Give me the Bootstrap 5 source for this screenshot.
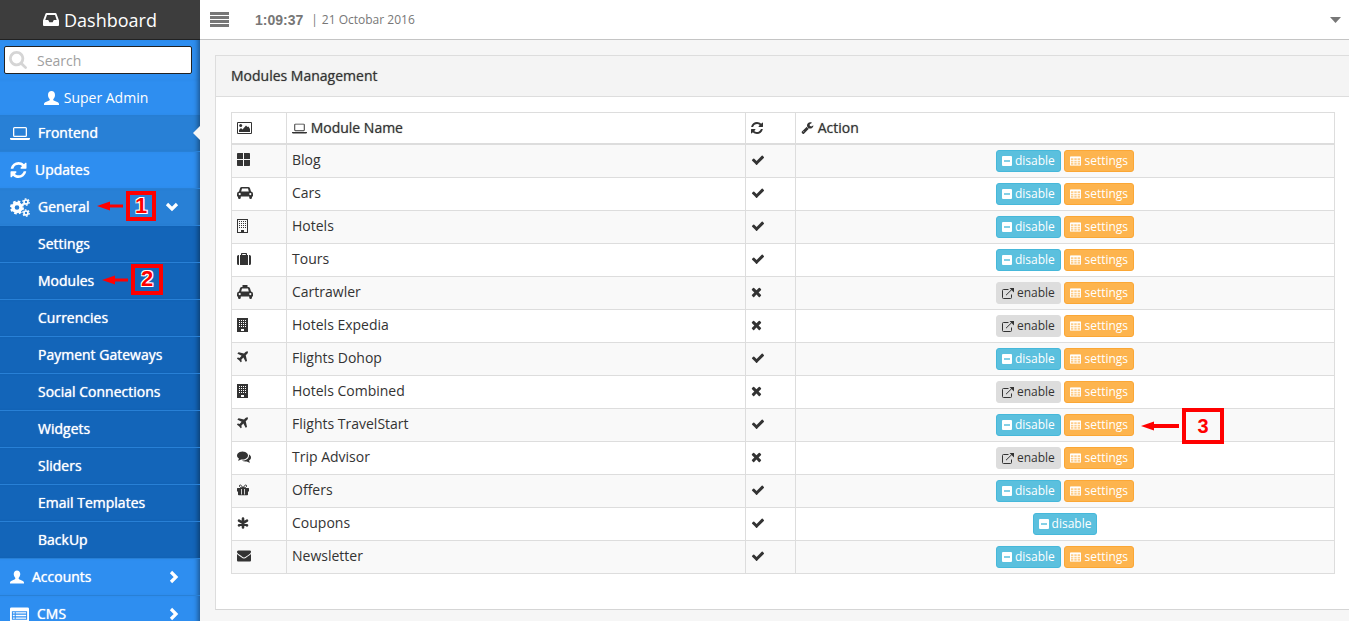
<!DOCTYPE html>
<html lang="en">
<head>
<meta charset="utf-8">
<meta name="viewport" content="width=device-width, initial-scale=1">
<title>Dashboard - Modules Management</title>
<link rel="stylesheet" href="https://cdn.jsdelivr.net/npm/bootstrap@5.3.0/dist/css/bootstrap.min.css">
<style>
  body { font-family: "Open Sans", sans-serif; font-size: 14px; line-height: 20px; color: #333; background: #f6f6f6; }
  svg { fill: currentColor; flex: none; }
  .shell { height: 100vh; }
  .strong-text { font-weight: 400; text-shadow: 0 0 1px currentColor; }
  .panel .strong-text { text-shadow: 0 0 1px rgba(51,51,51,.6); }

  .side { width: 200px; background: #2e8ef0; color: #fff; }
  .brand-bar { height: 40px; gap: 5px; background: #3d3d3d; border-bottom: 1px solid #222; font-size: 18px; color: #fff; }
  .side-search, .side-user, .side-item { box-shadow: inset -6px 0 5px -4px rgba(0,0,0,.4); }
  .side-search { height: 40px; padding: 6px 8px 6px 4px; }
  .side-search label { left: 5px; top: 5px; color: #d5d5d5; }
  .side-search label svg { display: block; }
  .side-search input { height: 28px; padding: 0 8px 0 32px; font-size: 14px; line-height: 20px; border: 1px solid #222; border-radius: 2px; color: #555; }
  .side-search input::placeholder { color: #a0a0a0; }
  .side-user { height: 35px; gap: 5px; padding-right: 8px; }
  .side-item { position: relative; height: 37px; padding: 0 21px 0 10px; gap: 8px; border-bottom: 1px solid #2880d6; color: #fff; text-decoration: none; }
  .side-item.current { background: #2880d6; }
  .side-sub .side-item { background: #1365b9; padding-left: 38px; }
  .pointer { position: absolute; right: 0; top: 11px; border: 7px solid transparent; border-left: 0; border-right-color: #f6f6f6; }

  .callout { position: absolute; z-index: 2; gap: 3px; color: #f00; font: bold 22px/24px "Liberation Sans", Arial, sans-serif; }
  .callout b { border: 4px solid #f00; text-align: center; text-shadow: 1px 1px 0 #fff, -1px -1px 0 #fff, 1px -1px 0 #fff, -1px 1px 0 #fff; }
  .callout-one { left: 97px; top: 2px; }
  .callout-one b { width: 30px; height: 30px; line-height: 22px; }
  .callout-two { left: 102px; top: 1px; }
  .callout-two b { width: 32px; height: 31px; line-height: 22px; }
  .callout-three { left: calc(50% + 76px); top: -1px; font-size: 20px; }
  .callout-three b { width: 42px; height: 36px; line-height: 28px; text-shadow: none; }

  .top-bar { height: 40px; background: #fff; border-bottom: 1px solid #c4c4c4; color: #777; padding: 0 8px 0 10px; }
  .top-bar button { background: none; border: 0; padding: 0; color: #777; display: flex; }
  .clock { margin-left: 26px; font: bold 14px/20px "Liberation Sans", Arial, sans-serif; }
  .date { font-size: 12px; }

  .page-main { padding: 15px 0 0 15px; }
  .panel { background: #fff; border: 1px solid #ddd; border-right: 0; border-bottom: 1px solid #d5d5d5; }
  .panel-title { background: #f4f4f4; border-bottom: 1px solid #ddd; padding: 10px 15px; font-size: 14px; line-height: 20px; }
  .panel-content { padding: 15px 14px 15px 15px; }
  .modules { table-layout: fixed; margin-bottom: 20px; color: #333; border-color: #ddd; }
  .modules > :not(caption) > * > * { padding: 5px; background: none; box-shadow: none; border: 1px solid #ddd; vertical-align: top; }
  .modules > thead > tr > th { border-bottom-width: 2px; }
  .modules > tbody > tr:nth-child(odd) { background: #f9f9f9; }
  .modules > tbody { border-top: 0; }
  .modules svg { display: block; margin-top: 3px; }
  .modules th svg { margin-top: 4px; }
  .modules .strong-text svg { display: inline-block; vertical-align: -1px; margin: 0; }
  .modules td.actions { position: relative; }
  .act { display: inline-flex; align-items: center; vertical-align: top; gap: 3px; height: 22px; padding: 0 5px; font-size: 12px; line-height: 18px; border: 1px solid; border-radius: 3px; }
  .modules .act svg { margin: 0; }
  .act-off { background: #5bc0de; border-color: #46b8da; color: #fff; }
  .act-on { background: #ddd; border-color: #ddd; color: #333; }
  .act-set { background: #fdb44e; border-color: #fba735; color: #fff; }
</style>
</head>
<body>
<svg class="d-none" aria-hidden="true">
  <symbol id="i-check" viewBox="0 0 1792 1792"><path d="M1671 566q0 40-28 68l-724 724-136 136q-28 28-68 28t-68-28l-136-136-362-362q-28-28-28-68t28-68l136-136q28-28 68-28t68 28l294 295 656-657q28-28 68-28t68 28l136 136q28 28 28 68z"/></symbol>
  <symbol id="i-times" viewBox="200 200 1400 1400"><path d="M1490 1322q0 40-28 68l-136 136q-28 28-68 28t-68-28l-294-294-294 294q-28 28-68 28t-68-28l-136-136q-28-28-28-68t28-68l294-294-294-294q-28-28-28-68t28-68l136-136q28-28 68-28t68 28l294 294 294-294q28-28 68-28t68 28l136 136q28 28 28 68t-28 68l-294 294 294 294q28 28 28 68z"/></symbol>
  <symbol id="i-refresh" viewBox="128 128 1536 1536"><path d="M1639 1056q0 5-1 7-64 268-268 434.500t-478 166.500q-146 0-282.500-55t-243.500-157l-129 129q-19 19-45 19t-45-19-19-45v-448q0-26 19-45t45-19h448q26 0 45 19t19 45-19 45l-137 137q71 66 161 102t187 36q134 0 250-65t186-179q11-17 53-117 8-23 30-23h192q13 0 22.500 9.500t9.500 22.500zm25-800v448q0 26-19 45t-45 19h-448q-26 0-45-19t-19-45 19-45l138-138q-148-137-349-137-134 0-250 65t-186 179q-11 17-53 117-8 23-30 23h-199q-13 0-22.500-9.500t-9.500-22.500v-7q65-268 270-434.500t480-166.500q146 0 284 55.500t245 156.500l130-129q19-19 45-19t45 19 19 45z"/></symbol>
  <symbol id="i-envelope" viewBox="0 256 1792 1408"><path d="M1792 710v794q0 66-47 113t-113 47h-1472q-66 0-113-47t-47-113v-794q44 49 101 87 362 246 497 345 57 42 92.500 65.500t94.500 48 110 24.500h2q51 0 110-24.500t94.500-48 92.500-65.500q170-123 498-345 57-39 100-87zm0-294q0 79-49 151t-122 123q-376 261-468 325-10 7-42.500 31t-54 38.500-52 32.500-57.500 27-50 9h-2q-23 0-50-9t-57.500-27-52-32.500-54-38.500-42.500-31q-91-64-262-182.500t-205-142.500q-62-42-117-115.500t-55-136.500q0-78 41.500-130t118.500-52h1472q65 0 112.500 47t47.500 113z"/></symbol>
  <symbol id="i-comments" viewBox="0 128 1792 1664"><path d="M1408 768q0 139-94 257t-256.500 186.500-353.500 68.500q-86 0-176-16-124 88-278 128-36 9-86 16h-3q-11 0-20.500-8t-11.500-21q-1-3-1-6.500t.5-6.500 2-6l2.500-5 3.500-5.500 4-5 4.500-5 4-4.500q5-6 23-25t26-29.500 22.500-29 25-38.500 20.500-44q-124-72-195-177t-71-224q0-139 94-257t256.500-186.500 353.500-68.500 353.500 68.500 256.500 186.500 94 257zm384 256q0 120-71 224.500t-195 176.500q10 24 20.500 44t25 38.500 22.500 29 26 29.500 23 25q1 1 4 4.500t4.500 5 4 5 3.500 5.500l2.500 5 2 6 .5 6.500-1 6.500q-3 14-13 22t-22 7q-50-7-86-16-154-40-278-128-90 16-176 16-271 0-472-132 58 4 88 4 161 0 309-45t264-129q125-92 192-212t67-254q0-77-23-152 129 71 204 178t75 230z"/></symbol>
  <symbol id="i-wrench" viewBox="64 100 1680 1680"><path d="M448 1472q0-26-19-45t-45-19-45 19-19 45 19 45 45 19 45-19 19-45zm644-420l-682 682q-37 37-90 37-52 0-91-37l-106-108q-38-36-38-90 0-53 38-91l681-681q39 98 114.500 173.500t173.500 114.500zm634-435q0 39-23 106-47 134-164.500 217.500t-258.500 83.500q-185 0-316.500-131.500t-131.500-316.500 131.500-316.500 316.500-131.500q58 0 121.500 16.500t107.500 46.500q16 11 16 28t-16 28l-293 169v224l193 107q5-3 79-48.500t135.500-81 70.500-35.500q15 0 23.500 10t8.500 25z"/></symbol>
  <symbol id="i-plane" viewBox="192 100 1536 1536"><path d="M1568 160q44 52 12 148t-108 172l-161 161 160 696q5 19-12 33l-128 96q-7 6-19 6-4 0-7-1-15-3-21-16l-279-508-259 259 53 194q5 17-8 31l-96 96q-9 9-23 9h-2q-15-2-24-13l-189-252-252-189q-11-7-13-23-1-13 9-25l96-97q9-9 23-9 6 0 8 1l194 53 259-259-508-279q-14-8-17-24-2-16 9-27l128-128q14-13 30-8l665 159 160-160q76-76 172-108t148 12z"/></symbol>
  <symbol id="i-search" viewBox="64 128 1664 1664"><path d="M1216 832q0-185-131.500-316.500t-316.500-131.500-316.500 131.500-131.500 316.500 131.500 316.500 316.500 131.500 316.500-131.500 131.500-316.500zm512 832q0 52-38 90t-90 38q-54 0-90-38l-343-342q-179 124-399 124-143 0-273.500-55.500t-225-150-150-225-55.500-273.500 55.500-273.500 150-225 225-150 273.500-55.500 273.500 55.500 225 150 150 225 55.500 273.500q0 220-124 399l343 343q37 37 37 90z"/></symbol>
  <symbol id="i-inbox" viewBox="0 0 16 13"><path fill-rule="evenodd" d="M3.600 0h8.800q.8 0 1.100.7L16 7.500V12q0 1-1 1H1q-1 0-1-1V7.500L2.500.7Q2.800 0 3.600 0zM4 2L2.300 7h2.900l1.200 2.200h3.200L10.800 7h2.900L12 2z"/></symbol>
  <symbol id="i-user" viewBox="0 0 15 14"><path d="M7.500 0C5.400 0 4 1.500 4 3.900c0 1.600.7 3.100 1.600 4 .3.300.2 1.200-.3 1.500L1.200 11.200C.4 11.600 0 12.200 0 13v1h15v-1c0-.8-.4-1.400-1.200-1.800L9.700 9.400c-.5-.3-.6-1.200-.3-1.500.9-.9 1.600-2.400 1.600-4C11 1.500 9.600 0 7.500 0z"/></symbol>
  <symbol id="i-laptop" viewBox="0 0 20 13"><path fill-rule="evenodd" d="M4.500 0h11Q17 0 17 1.500v7q0 1.500-1.500 1.500h-11Q3 10 3 8.500v-7Q3 0 4.500 0zM4.300 1.200v7.600h11.400V1.200zM0 11h20v.8q0 1.200-1.500 1.200h-17Q0 13 0 11.800z"/></symbol>
  <symbol id="i-cogs" viewBox="0 0 20 19">
    <g fill="none" stroke="currentColor"><circle cx="7" cy="9.500" r="4" stroke-width="3.400"/><circle cx="7" cy="9.500" r="6" stroke-width="2" stroke-dasharray="2.600 2.112"/><circle cx="16" cy="4" r="2" stroke-width="1.700"/><circle cx="16" cy="4" r="3.200" stroke-width="1.300" stroke-dasharray="1.700 1.650"/><circle cx="16" cy="15" r="2" stroke-width="1.700"/><circle cx="16" cy="15" r="3.200" stroke-width="1.300" stroke-dasharray="1.700 1.650"/></g></symbol>
  <symbol id="i-list" viewBox="0 0 20 15"><path fill-rule="evenodd" d="M1.500 0h17Q20 0 20 1.500v12q0 1.500-1.500 1.500h-17Q0 15 0 13.500v-12Q0 0 1.500 0zM2 4v9h16V4zM3 5h2v1.500H3zm3 0h11v1.500H6zM3 7.800h2v1.500H3zm3 0h11v1.500H6zM3 10.600h2v1.500H3zm3 0h11v1.500H6z"/></symbol>
  <symbol id="i-right" viewBox="0 0 10 14"><path d="M2 2l5 5-5 5" fill="none" stroke="currentColor" stroke-width="3.200"/></symbol>
  <symbol id="i-down" viewBox="0 0 14 10"><path d="M2 2l5 5 5-5" fill="none" stroke="currentColor" stroke-width="3.200"/></symbol>
  <symbol id="i-arrow" viewBox="0 0 26 10"><path d="M0 5L13 .500V3.500H26v3H13v3z"/></symbol>
  <symbol id="i-arrow-long" viewBox="0 0 38 10"><path d="M0 5L13 .500V3H38v4H13v2.500z"/></symbol>
  <symbol id="i-picture" viewBox="0 0 15 12"><path fill-rule="evenodd" d="M1 0h13q1 0 1 1v10q0 1-1 1H1q-1 0-1-1V1q0-1 1-1zM1 1v10h13V1z"/><circle cx="3.700" cy="3.500" r="1.500"/><path d="M2 10V8l2-2 1.500 1.500L9 3.500l1.500 1.500 1-.5L13 7v3z"/></symbol>
  <symbol id="i-large" viewBox="0 0 13 13"><path d="M0 .8Q0 0 .8 0H6v6H0zM7 0h5.200q.8 0 .8.8V6H7zM0 7h6v6H.8Q0 13 0 12.200zM7 7h6v5.200q0 .8-.8.8H7z"/></symbol>
  <symbol id="i-car" viewBox="0 0 16 12"><path fill-rule="evenodd" d="M4.800 0h6.400q1.400 0 1.800 1.200L14 4.500q2 .2 2 2.300v2.400q0 .4-.5.400H15v.9q0 1.500-1.400 1.500T12.200 10.500v-.9H3.800v.9Q3.800 12 2.400 12T1 10.500v-.9H.5Q0 9.600 0 9.200V6.800Q0 4.700 2 4.500L3 1.200Q3.400 0 4.800 0zM5 1.500L4.200 4.500h7.600L11 1.500zM2.700 6a1.100 1.100 0 100 2.200 1.100 1.100 0 000-2.200zm10.600 0a1.100 1.100 0 100 2.200 1.100 1.100 0 000-2.200z"/></symbol>
  <symbol id="i-taxi" viewBox="0 0 16 14"><path d="M5.500 0h5v2.500h-5z"/><path fill-rule="evenodd" d="M4.800 2h6.400q1.400 0 1.800 1.200L14 6.500q2 .2 2 2.300v2.400q0 .4-.5.400H15v.9q0 1.500-1.400 1.500T12.200 12.500v-.9H3.800v.9Q3.800 14 2.400 14T1 12.500v-.9H.5Q0 11.600 0 11.200V8.800Q0 6.700 2 6.500L3 3.200Q3.400 2 4.800 2zM5 3.500L4.200 6.500h7.600L11 3.500zM2.700 8a1.100 1.100 0 100 2.200 1.100 1.100 0 000-2.200zm10.600 0a1.100 1.100 0 100 2.200 1.100 1.100 0 000-2.200z"/></symbol>
  <symbol id="i-hotel" viewBox="0 0 11 14"><path fill-rule="evenodd" d="M0 0h11v14H0zM1 1v12h3v-2h3v2h3V1z"/><path d="M2 2.500h7M2 4.500h7M2 6.500h7M2 8.500h7" stroke="currentColor" stroke-dasharray="1 1"/></symbol>
  <symbol id="i-tower" viewBox="0 0 11 14"><path fill-rule="evenodd" d="M0 0h11v14H0zM4 11v2h3v-2z"/><path d="M2 2.500h7M2 4.500h7M2 6.500h7M2 8.500h7" stroke="#fff" stroke-dasharray="1 1"/></symbol>
  <symbol id="i-suitcase" viewBox="0 0 14 12"><path fill-rule="evenodd" d="M4 2V.8Q4 0 4.800 0h4.400q.8 0 .8.800V2h1v10H3V2zm1.200 0h3.600V1H5.200zM2 2v10h-.5Q0 12 0 10.500v-7Q0 2 1.500 2zm10 0h.5Q14 2 14 3.500v7q0 1.500-1.500 1.500H12z"/></symbol>
  <symbol id="i-gift" viewBox="0 0 12 12"><path fill-rule="evenodd" d="M.5 4h11q.5 0 .5.500V7.500H11v3q0 .8-.8.800H1.800Q1 11.300 1 10.500v-3H0v-3Q0 4 .5 4zM4.200 5v5.500h.8V5zm2.800 0v5.500h.8V5z"/><path d="M6 4Q4.500 1 3.300 1T2.500 2.500Q2.800 3.900 6 4 7.500 1 8.700 1t.8 1.500Q9.200 3.900 6 4" fill="none" stroke="currentColor" stroke-width="1"/></symbol>
  <symbol id="i-asterisk" viewBox="0 0 12 12"><path d="M6 1.500v9M2 3.700l8 4.600M10 3.700L2 8.300" stroke="currentColor" stroke-width="2.600" stroke-linecap="round"/></symbol>
  <symbol id="i-minus" viewBox="0 0 10 10"><path fill-rule="evenodd" d="M1 0h8q1 0 1 1v8q0 1-1 1H1q-1 0-1-1V1q0-1 1-1zM2 4.200v1.600h6V4.200z"/></symbol>
  <symbol id="i-open" viewBox="0 0 12 11"><path d="M6.500 1.500H1.500Q.5 1.500.5 2.500v7q0 1 1 1h7q1 0 1-1V6.500M4 7.200L9.800 1.500" fill="none" stroke="currentColor" stroke-width="1"/><path d="M7.500 0H12v4.500z"/></symbol>
  <symbol id="i-grid" viewBox="0 0 12 10"><path fill-rule="evenodd" d="M1 0h10q1 0 1 1v8q0 1-1 1H1q-1 0-1-1V1q0-1 1-1zM1 2v1.800h2.700V2zm3.700 0v1.800h2.600V2zm3.600 0v1.800H11V2zM1 4.700v1.800h2.700V4.700zm3.700 0v1.800h2.600V4.700zm3.600 0v1.800H11V4.700zM1 7.300V9h2.700V7.300zm3.700 0V9h2.600V7.300zm3.600 0V9H11V7.300z"/><path d="M0 0h12v10H0z" fill-opacity=".35"/></symbol>
</svg>

<div class="shell d-flex overflow-hidden">
  <nav class="side flex-shrink-0" aria-label="Main">
    <div class="brand-bar d-flex align-items-center justify-content-center"><svg width="16" height="13"><use href="#i-inbox"/></svg>Dashboard</div>
    <form class="side-search">
      <div class="position-relative">
        <input id="q" class="w-100 d-block" type="text" placeholder="Search">
        <label class="position-absolute" for="q"><svg width="18" height="18" role="img" aria-label="Search"><use href="#i-search"/></svg></label>
      </div>
    </form>
    <div class="side-user d-flex align-items-center justify-content-center"><svg width="15" height="14"><use href="#i-user"/></svg>Super Admin</div>
    <a class="side-item current strong-text d-flex align-items-center" href="#"><svg width="20" height="13"><use href="#i-laptop"/></svg>Frontend<span class="pointer"></span></a>
    <a class="side-item strong-text d-flex align-items-center" href="#"><svg width="17" height="16"><use href="#i-refresh"/></svg>Updates</a>
    <a class="side-item current strong-text d-flex align-items-center" href="#"><svg width="20" height="19"><use href="#i-cogs"/></svg>General
      <span class="callout callout-one d-flex align-items-center"><svg width="26" height="10"><use href="#i-arrow"/></svg><b>1</b></span>
      <svg class="ms-auto" width="14" height="10"><use href="#i-down"/></svg></a>
    <div class="side-sub">
      <a class="side-item strong-text d-flex align-items-center" href="#">Settings</a>
      <a class="side-item strong-text d-flex align-items-center" href="#">Modules
        <span class="callout callout-two d-flex align-items-center"><svg width="26" height="10"><use href="#i-arrow"/></svg><b>2</b></span></a>
      <a class="side-item strong-text d-flex align-items-center" href="#">Currencies</a>
      <a class="side-item strong-text d-flex align-items-center" href="#">Payment Gateways</a>
      <a class="side-item strong-text d-flex align-items-center" href="#">Social Connections</a>
      <a class="side-item strong-text d-flex align-items-center" href="#">Widgets</a>
      <a class="side-item strong-text d-flex align-items-center" href="#">Sliders</a>
      <a class="side-item strong-text d-flex align-items-center" href="#">Email Templates</a>
      <a class="side-item strong-text d-flex align-items-center" href="#">BackUp</a>
    </div>
    <a class="side-item strong-text d-flex align-items-center" href="#"><svg width="14" height="14"><use href="#i-user"/></svg>Accounts<svg class="ms-auto" width="10" height="14"><use href="#i-right"/></svg></a>
    <a class="side-item strong-text d-flex align-items-center" href="#"><svg width="19" height="15"><use href="#i-list"/></svg>CMS<svg class="ms-auto" width="10" height="14"><use href="#i-right"/></svg></a>
  </nav>

  <div class="flex-grow-1">
    <header class="top-bar d-flex align-items-center">
      <button type="button" aria-label="Toggle menu"><svg width="19" height="15" viewBox="0 0 19 15"><path d="M0 0h19v3H0zM0 4h19v3H0zM0 8h19v3H0zM0 12h19v3H0z"/></svg></button>
      <span class="clock">1:09:37</span><span class="date ps-1 ms-1 me-1">|</span><span class="date">21 Octobar 2016</span>
      <button class="ms-auto" type="button" aria-label="Account menu"><svg width="11" height="6" viewBox="0 0 11 6"><path d="M0 0h11L5.500 6z"/></svg></button>
    </header>
    <main class="page-main">
      <section class="panel">
        <h1 class="panel-title strong-text m-0">Modules Management</h1>
        <div class="panel-content">
          <table class="table modules">
            <colgroup><col style="width:55px"><col style="width:459px"><col style="width:50px"><col></colgroup>
            <thead><tr>
              <th><svg width="15" height="12" role="img" aria-label="Icon"><use href="#i-picture"/></svg></th>
              <th class="strong-text"><svg width="15" height="11"><use href="#i-laptop"/></svg> Module Name</th>
              <th><svg width="12" height="12" role="img" aria-label="Status"><use href="#i-refresh"/></svg></th>
              <th class="strong-text"><svg width="13" height="12"><use href="#i-wrench"/></svg> Action</th>
            </tr></thead>
            <tbody>
              <tr><td><svg width="13" height="13"><use href="#i-large"/></svg></td><td>Blog</td><td><svg width="14" height="14"><use href="#i-check"/></svg></td><td class="actions text-center"><button type="button" class="act act-off"><svg width="10" height="10"><use href="#i-minus"/></svg>disable</button> <button type="button" class="act act-set"><svg width="11" height="10"><use href="#i-grid"/></svg>settings</button></td></tr>
              <tr><td><svg width="16" height="14"><use href="#i-car"/></svg></td><td>Cars</td><td><svg width="14" height="14"><use href="#i-check"/></svg></td><td class="actions text-center"><button type="button" class="act act-off"><svg width="10" height="10"><use href="#i-minus"/></svg>disable</button> <button type="button" class="act act-set"><svg width="11" height="10"><use href="#i-grid"/></svg>settings</button></td></tr>
              <tr><td><svg width="11" height="14"><use href="#i-hotel"/></svg></td><td>Hotels</td><td><svg width="14" height="14"><use href="#i-check"/></svg></td><td class="actions text-center"><button type="button" class="act act-off"><svg width="10" height="10"><use href="#i-minus"/></svg>disable</button> <button type="button" class="act act-set"><svg width="11" height="10"><use href="#i-grid"/></svg>settings</button></td></tr>
              <tr><td><svg width="14" height="14"><use href="#i-suitcase"/></svg></td><td>Tours</td><td><svg width="14" height="14"><use href="#i-check"/></svg></td><td class="actions text-center"><button type="button" class="act act-off"><svg width="10" height="10"><use href="#i-minus"/></svg>disable</button> <button type="button" class="act act-set"><svg width="11" height="10"><use href="#i-grid"/></svg>settings</button></td></tr>
              <tr><td><svg width="16" height="14"><use href="#i-taxi"/></svg></td><td>Cartrawler</td><td><svg width="11" height="14"><use href="#i-times"/></svg></td><td class="actions text-center"><button type="button" class="act act-on"><svg width="12" height="11"><use href="#i-open"/></svg>enable</button> <button type="button" class="act act-set"><svg width="11" height="10"><use href="#i-grid"/></svg>settings</button></td></tr>
              <tr><td><svg width="11" height="14"><use href="#i-tower"/></svg></td><td>Hotels Expedia</td><td><svg width="11" height="14"><use href="#i-times"/></svg></td><td class="actions text-center"><button type="button" class="act act-on"><svg width="12" height="11"><use href="#i-open"/></svg>enable</button> <button type="button" class="act act-set"><svg width="11" height="10"><use href="#i-grid"/></svg>settings</button></td></tr>
              <tr><td><svg width="12" height="12"><use href="#i-plane"/></svg></td><td>Flights Dohop</td><td><svg width="14" height="14"><use href="#i-check"/></svg></td><td class="actions text-center"><button type="button" class="act act-off"><svg width="10" height="10"><use href="#i-minus"/></svg>disable</button> <button type="button" class="act act-set"><svg width="11" height="10"><use href="#i-grid"/></svg>settings</button></td></tr>
              <tr><td><svg width="11" height="14"><use href="#i-tower"/></svg></td><td>Hotels Combined</td><td><svg width="11" height="14"><use href="#i-times"/></svg></td><td class="actions text-center"><button type="button" class="act act-on"><svg width="12" height="11"><use href="#i-open"/></svg>enable</button> <button type="button" class="act act-set"><svg width="11" height="10"><use href="#i-grid"/></svg>settings</button></td></tr>
              <tr><td><svg width="12" height="12"><use href="#i-plane"/></svg></td><td>Flights TravelStart</td><td><svg width="14" height="14"><use href="#i-check"/></svg></td><td class="actions text-center"><button type="button" class="act act-off"><svg width="10" height="10"><use href="#i-minus"/></svg>disable</button> <button type="button" class="act act-set"><svg width="11" height="10"><use href="#i-grid"/></svg>settings</button>
                <span class="callout callout-three d-flex align-items-center"><svg class="m-0" width="38" height="10"><use href="#i-arrow-long"/></svg><b>3</b></span></td></tr>
              <tr><td><svg width="14" height="14"><use href="#i-comments"/></svg></td><td>Trip Advisor</td><td><svg width="11" height="14"><use href="#i-times"/></svg></td><td class="actions text-center"><button type="button" class="act act-on"><svg width="12" height="11"><use href="#i-open"/></svg>enable</button> <button type="button" class="act act-set"><svg width="11" height="10"><use href="#i-grid"/></svg>settings</button></td></tr>
              <tr><td><svg width="12" height="14"><use href="#i-gift"/></svg></td><td>Offers</td><td><svg width="14" height="14"><use href="#i-check"/></svg></td><td class="actions text-center"><button type="button" class="act act-off"><svg width="10" height="10"><use href="#i-minus"/></svg>disable</button> <button type="button" class="act act-set"><svg width="11" height="10"><use href="#i-grid"/></svg>settings</button></td></tr>
              <tr><td><svg width="12" height="14"><use href="#i-asterisk"/></svg></td><td>Coupons</td><td><svg width="14" height="14"><use href="#i-check"/></svg></td><td class="actions text-center"><button type="button" class="act act-off"><svg width="10" height="10"><use href="#i-minus"/></svg>disable</button></td></tr>
              <tr><td><svg width="14" height="14"><use href="#i-envelope"/></svg></td><td>Newsletter</td><td><svg width="14" height="14"><use href="#i-check"/></svg></td><td class="actions text-center"><button type="button" class="act act-off"><svg width="10" height="10"><use href="#i-minus"/></svg>disable</button> <button type="button" class="act act-set"><svg width="11" height="10"><use href="#i-grid"/></svg>settings</button></td></tr>
            </tbody>
          </table>
        </div>
      </section>
    </main>
  </div>
</div>
<script src="https://cdn.jsdelivr.net/npm/bootstrap@5.3.0/dist/js/bootstrap.bundle.min.js"></script>
</body>
</html>
